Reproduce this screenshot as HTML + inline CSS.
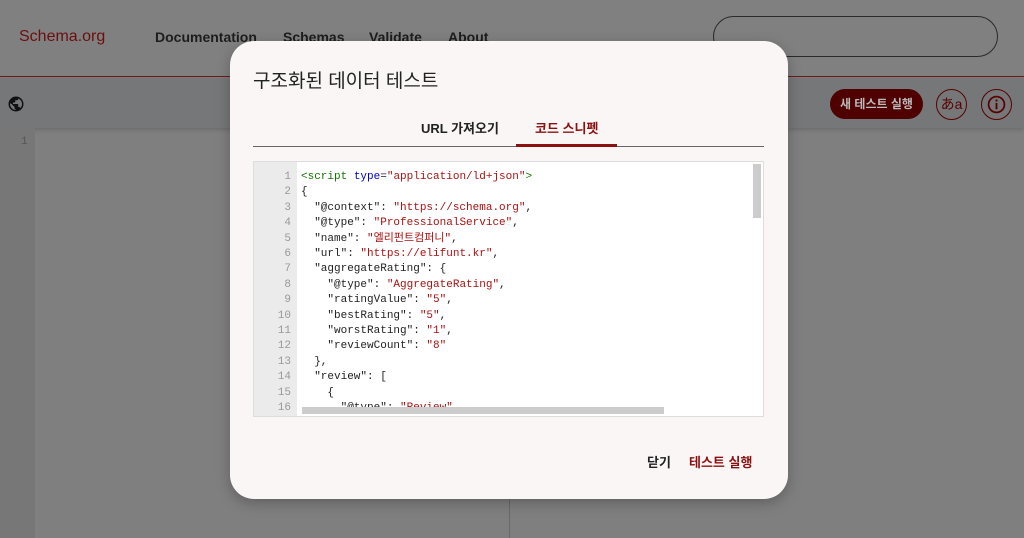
<!DOCTYPE html>
<html><head><meta charset="utf-8"><style>
*{margin:0;padding:0;box-sizing:border-box}
body{width:1024px;height:538px;overflow:hidden;position:relative;background:#7f7f7f;font-family:"Liberation Sans","Noto Sans CJK KR",sans-serif}
.hdr{position:absolute;left:0;top:0;width:1024px;height:77px;background:#808080;border-bottom:1px solid #6e1a1a}
.logo{position:absolute;left:19px;top:28px;font-size:16px;color:#6a0f0f}
.nav{position:absolute;top:29px;font-size:14px;color:#1d1d1d;font-weight:bold}
.search{position:absolute;left:713px;top:16px;width:285px;height:41px;border:1px solid #2a2a2a;border-radius:21px}
.tb{position:absolute;left:0;top:78px;width:1024px;height:50px;background:#767779;box-shadow:0 2px 4px rgba(0,0,0,.15)}
.gut{position:absolute;left:0;top:128px;width:35px;height:410px;background:#777}
.vl{position:absolute;left:509px;top:128px;width:1px;height:410px;background:#6a6a6a}
.btn{position:absolute;left:830px;top:89px;width:93px;height:30px;border-radius:15px;background:#4f0000;color:#bbb;font-size:12px;font-weight:bold;text-align:center;line-height:30px}
.circ{position:absolute;top:89px;width:31px;height:31px;border:1px solid #5a0000;border-radius:50%;color:#5a0000;text-align:center;line-height:29px;font-size:14px}
.modal{position:absolute;left:230px;top:41px;width:558px;height:458px;background:#faf6f5;border-radius:24px;box-shadow:0 4px 14px rgba(0,0,0,.25)}
.title{position:absolute;left:23px;top:25px;font-size:19px;color:#222}
.tab{position:absolute;top:77px;font-size:13px;font-weight:bold}
.tline{position:absolute;left:23px;top:105px;width:511px;height:1px;background:#666}
.act{position:absolute;left:286px;top:103px;width:101px;height:3px;background:#8b1010}
.code{position:absolute;left:23px;top:120px;width:511px;height:256px;border:1px solid #ddd;background:#fff;overflow:hidden}
.lg{position:absolute;left:0;top:0;width:43px;height:100%;background:#ebebeb}
pre{font-family:"Liberation Mono","Noto Sans CJK KR",monospace;font-size:11px;line-height:15.4px;position:absolute;top:8px}
.ln{left:0;width:37px;text-align:right;color:#999}
.src{left:47px;color:#222}
.t{color:#170}.a{color:#00c}.s{color:#a11}
.vs{position:absolute;right:2px;top:2px;width:8px;height:54px;background:#ccc}
.hs{position:absolute;left:48px;bottom:2px;width:362px;height:7px;background:#ccc}
.foot{position:absolute;top:411px;font-size:13px;font-weight:bold}
</style></head><body>
<div class="hdr">
<div class="logo">Schema.org</div>
<div class="nav" style="left:155px">Documentation</div>
<div class="nav" style="left:283px">Schemas</div>
<div class="nav" style="left:369px">Validate</div>
<div class="nav" style="left:448px">About</div>
<div class="search"></div>
</div>
<div class="tb">
<svg style="position:absolute;left:7px;top:17px" width="18" height="18" viewBox="0 0 24 24"><path fill="#111" d="M12 2a10 10 0 100 20 10 10 0 000-20zm-1 17.9A8 8 0 014 12l1-1 5 5v1a2 2 0 002 2zm6.9-2.5A2 2 0 0016 16h-1v-3a1 1 0 00-1-1H8v-2h2a1 1 0 001-1V7h2a2 2 0 002-2v-.4a8 8 0 012.9 12.8z"/></svg>
</div>
<div class="btn">새 테스트 실행</div>
<div class="circ" style="left:936px">あa</div>
<div class="circ" style="left:981px"><svg style="position:absolute;left:5px;top:5px" width="19" height="19" viewBox="0 0 24 24"><circle cx="12" cy="12" r="10" fill="none" stroke="#5a0000" stroke-width="2.2"/><rect x="10.8" y="10" width="2.4" height="8" fill="#5a0000"/><circle cx="12" cy="7" r="1.4" fill="#5a0000"/></svg></div>
<div class="gut"><div style="position:absolute;left:21px;top:8px;font-size:11px;color:#555;font-family:'Liberation Mono',monospace">1</div></div>
<div class="vl"></div>
<div class="modal">
<div class="title">구조화된 데이터 테스트</div>
<div class="tab" style="left:191px;color:#222">URL 가져오기</div>
<div class="tab" style="left:305px;color:#8b1010">코드 스니펫</div>
<div class="tline"></div><div class="act"></div>
<div class="code"><div class="lg"></div>
<pre class="ln">1
2
3
4
5
6
7
8
9
10
11
12
13
14
15
16</pre>
<pre class="src"><span class="t">&lt;script</span> <span class="a">type</span>=<span class="s">"application/ld+json"</span><span class="t">&gt;</span>
{
  "@context": <span class="s">"https://schema.org"</span>,
  "@type": <span class="s">"ProfessionalService"</span>,
  "name": <span class="s">"엘리펀트컴퍼니"</span>,
  "url": <span class="s">"https://elifunt.kr"</span>,
  "aggregateRating": {
    "@type": <span class="s">"AggregateRating"</span>,
    "ratingValue": <span class="s">"5"</span>,
    "bestRating": <span class="s">"5"</span>,
    "worstRating": <span class="s">"1"</span>,
    "reviewCount": <span class="s">"8"</span>
  },
  "review": [
    {
      "@type": <span class="s">"Review"</span>,</pre>
<div class="vs"></div><div class="hs"></div>
</div>
<div class="foot" style="left:417px;color:#222">닫기</div>
<div class="foot" style="left:459px;color:#8b1010">테스트 실행</div>
</div>
</body></html>
